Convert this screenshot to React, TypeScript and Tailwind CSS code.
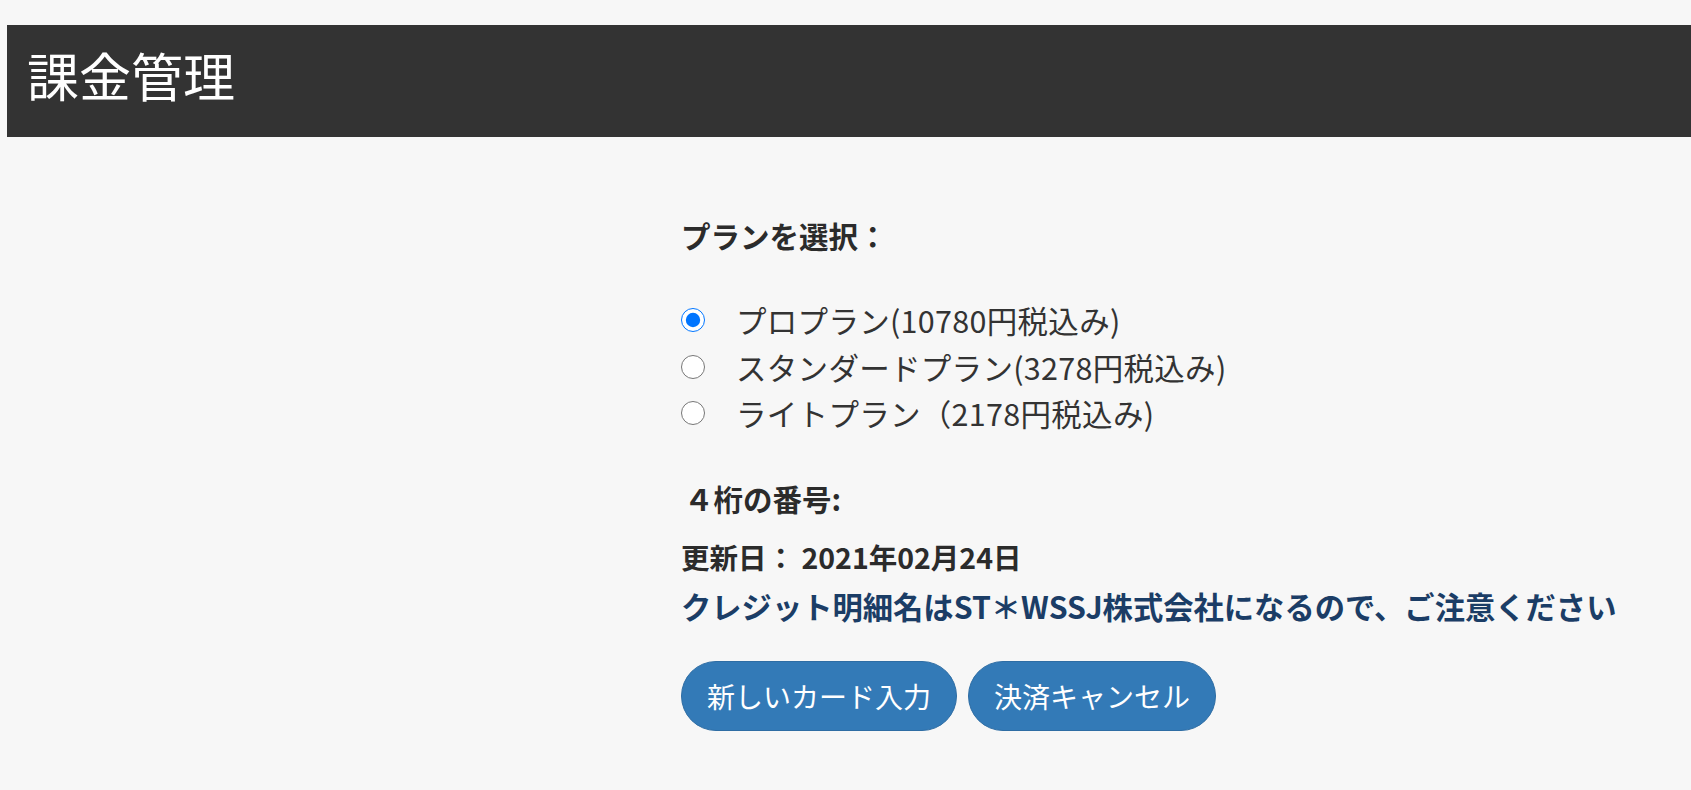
import React, { useState } from 'react';

const plans = [
  { id: 'pro', label: 'プロプラン(10780円税込み)' },
  { id: 'standard', label: 'スタンダードプラン(3278円税込み)' },
  { id: 'light', label: 'ライトプラン（2178円税込み)' },
];

export default function App() {
  const [plan, setPlan] = useState('pro');

  return (
    <div
      className="min-h-screen bg-[#f7f7f7] pt-[25px] pl-[7px] text-[#333]"
      style={{ fontFamily: '"Noto Sans CJK JP", "Noto Sans", sans-serif' }}
    >
      {/* Header */}
      <header className="h-[112px] bg-[#333333] flex items-center pl-[20px] pb-[12px]">
        <h1 className="text-[52px] leading-none font-normal text-white">課金管理</h1>
      </header>

      {/* Billing form */}
      <div className="pl-[674px] pt-[78px]">
        <h3 className="text-[29.5px] leading-[40px] font-bold text-[#2b2b2b]">プランを選択：</h3>

        <div className="mt-[42px] flex flex-col">
          {plans.map((p) => (
            <label key={p.id} className="flex items-center h-[46.5px] cursor-pointer">
              <input
                type="radio"
                name="plan"
                checked={plan === p.id}
                onChange={() => setPlan(p.id)}
                className="w-[24px] h-[24px] m-0 accent-[#0075ff]"
              />
              <span className="ml-[31px] text-[30.5px] leading-none tracking-[0.3px]">{p.label}</span>
            </label>
          ))}
        </div>

        <h3 className="mt-[41px] pl-[3px] text-[29.5px] leading-[40px] font-bold text-[#2b2b2b]">４桁の番号:</h3>

        <p className="mt-[21px] text-[28.5px] leading-[36px] font-bold text-[#2b2b2b]">更新日： 2021年02月24日</p>

        <p className="mt-[11px] text-[30.3px] leading-[40px] font-bold text-[#1b3d66]">
          クレジット明細名はST＊WSSJ株式会社になるので、ご注意ください
        </p>

        <div className="mt-[35px] flex gap-[11px]">
          <button className="h-[70px] px-[25px] rounded-full bg-[#337ab7] border border-[#2e6da4] text-white text-[28px] leading-none">
            新しいカード入力
          </button>
          <button className="h-[70px] px-[25px] rounded-full bg-[#337ab7] border border-[#2e6da4] text-white text-[28px] leading-none">
            決済キャンセル
          </button>
        </div>
      </div>
    </div>
  );
}
